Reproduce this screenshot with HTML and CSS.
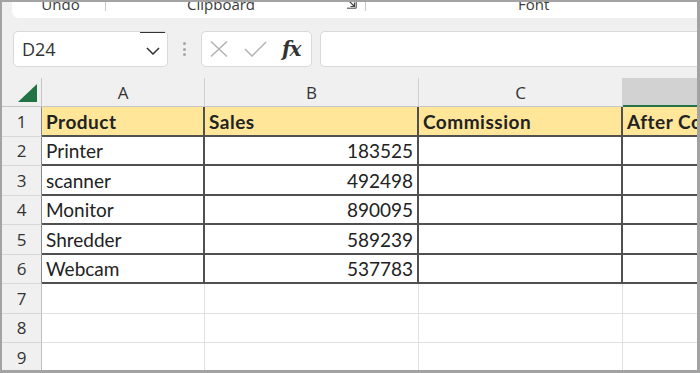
FILE: index.html
```html
<!DOCTYPE html>
<html>
<head>
<meta charset="utf-8">
<link rel="stylesheet" href="styles.css">
</head>
<body>
<div class="frame">
  <div class="ribbon">
    <div class="grp g1"><span class="lbl">Undo</span></div>
    <div class="sep"></div>
    <div class="grp g2"><span class="lbl">Clipboard</span>
      <svg class="launcher" width="10" height="10" viewBox="0 0 10 10"><path d="M1.5 1.5 L7.5 7.5 M3.5 7.5 H7.5 V3.5" fill="none" stroke="#444" stroke-width="1.2"/><path d="M9.2 0 V9.2 H0" fill="none" stroke="#444" stroke-width="1"/></svg>
    </div>
    <div class="sep"></div>
    <div class="grp g3"><span class="lbl">Font</span></div>
  </div>

  <div class="fbar">
    <div class="namebox">
      <span class="ref">D24</span>
      <span class="dd"><svg width="14" height="8" viewBox="0 0 14 8"><path d="M1 1 L7 7 L13 1" fill="none" stroke="#333" stroke-width="1.5"/></svg></span>
    </div>
    <div class="dots"><i></i><i></i><i></i></div>
    <div class="fxbox">
      <svg class="xic" width="18" height="16" viewBox="0 0 18 16"><path d="M1 0.5 L17 15.5 M17 0.5 L1 15.5" stroke="#b3b3b3" stroke-width="1.5" fill="none"/></svg>
      <svg class="ck" width="23" height="16" viewBox="0 0 23 16"><path d="M1 8 L8 15 L22 1" stroke="#b3b3b3" stroke-width="1.5" fill="none"/></svg>
      <span class="fx">fx</span>
    </div>
    <div class="finput"></div>
  </div>

  <div class="sheet">
    <div class="corner"><svg width="19" height="18" viewBox="0 0 19 18"><path d="M0 18 L19 18 L19 0 Z" fill="#217346"/></svg></div>
    <div class="ch">A</div>
    <div class="ch">B</div>
    <div class="ch">C</div>
    <div class="ch sel"></div>

    <div class="rh d">1</div>
    <div class="c hd">Product</div>
    <div class="c hd">Sales</div>
    <div class="c hd">Commission</div>
    <div class="c hd last">After Commission</div>

    <div class="rh d">2</div>
    <div class="c">Printer</div>
    <div class="c num">183525</div>
    <div class="c"></div>
    <div class="c last"></div>

    <div class="rh d">3</div>
    <div class="c">scanner</div>
    <div class="c num">492498</div>
    <div class="c"></div>
    <div class="c last"></div>

    <div class="rh d">4</div>
    <div class="c">Monitor</div>
    <div class="c num">890095</div>
    <div class="c"></div>
    <div class="c last"></div>

    <div class="rh d">5</div>
    <div class="c">Shredder</div>
    <div class="c num">589239</div>
    <div class="c"></div>
    <div class="c last"></div>

    <div class="rh d">6</div>
    <div class="c">Webcam</div>
    <div class="c num">537783</div>
    <div class="c"></div>
    <div class="c last"></div>

    <div class="rh">7</div>
    <div class="e"></div><div class="e"></div><div class="e"></div><div class="e last"></div>
    <div class="rh">8</div>
    <div class="e"></div><div class="e"></div><div class="e"></div><div class="e last"></div>
    <div class="rh">9</div>
    <div class="e"></div><div class="e"></div><div class="e"></div><div class="e last"></div>
  </div>
</div>
</body>
</html>
```

FILE: styles.css
```css
* { box-sizing: border-box; }
html, body { margin: 0; padding: 0; background: #fff; }

.frame {
  width: 700px;
  height: 373px;
  border: 2px solid #a3a3a3;
  border-right-width: 3px;
  border-bottom-width: 3px;
  background: #f0f0f0;
  display: flex;
  flex-direction: column;
  overflow: hidden;
  font-family: "Open Sans", "Noto Sans", sans-serif;
  color: #333;
}

/* ribbon */
.ribbon {
  flex-shrink: 0;
  height: 16px;
  margin-left: 10px;
  background: #fff;
  border-bottom-left-radius: 7px;
  display: flex;
}
.grp { display: flex; height: 16px; }
.lbl {
  display: block;
  font-size: 15px;
  line-height: 16px;
  margin-top: -6px;
  color: #3a3a3a;
  white-space: nowrap;
}
.g1 { width: 93px; justify-content: center; padding-left: 4px; }
.g2 { width: 259px; padding-left: 81px; }
.g3 { flex: 1; padding-left: 152px; }
.sep { width: 1px; height: 9px; background: #c8c8c8; }
.launcher { margin-left: auto; margin-right: 8px; margin-top: -3px; }

/* formula bar */
.fbar {
  flex-shrink: 0;
  margin-top: 13px;
  height: 36px;
  display: flex;
  padding-left: 11px;
}
.namebox {
  width: 155px;
  border: 1px solid #d9d9d9;
  border-radius: 5px;
  background: #fff;
  display: flex;
  align-items: center;
}
.ref {
  flex: 1;
  padding-left: 8px;
  font-size: 18px;
  color: #333;
}
.dd {
  width: 25px;
  align-self: stretch;
  margin-right: 2px;
  border-top: 1px solid #333;
  display: flex;
  align-items: center;
  justify-content: center;
  padding-top: 2px;
}
.dots {
  width: 3px;
  margin: 0 15px;
  display: flex;
  flex-direction: column;
  justify-content: center;
  gap: 2.5px;
}
.dots i { display: block; width: 3px; height: 3px; border-radius: 50%; background: #a6a6a6; }
.fxbox {
  width: 111px;
  border: 1px solid #d9d9d9;
  border-radius: 5px;
  background: #fff;
  display: flex;
  align-items: center;
  padding-left: 8px;
}
.ck { margin-left: 16px; }
.fx {
  margin-left: 15px;
  font-family: "DejaVu Serif", "Liberation Serif", serif;
  font-style: italic;
  font-weight: bold;
  font-size: 20px;
  color: #333;
  letter-spacing: -1px;
}
.finput {
  flex: 1;
  margin-left: 8px;
  border: 1px solid #d9d9d9;
  border-right: none;
  border-radius: 5px 0 0 5px;
  background: #fff;
}

/* sheet */
.sheet {
  margin-top: 11px;
  display: grid;
  grid-template-columns: 40px 163px 214px 204px 1fr;
  grid-template-rows: 29px repeat(9, 29.5px);
  background: #fff;
}
.corner {
  background: #f0f0f0;
  border-right: 1px solid #c6c6c6;
  border-bottom: 1px solid #c6c6c6;
  display: flex;
  justify-content: flex-end;
  align-items: flex-end;
  padding: 0 4px 4px 0;
}
.ch {
  background: #f0f0f0;
  border-right: 1px solid #d0d0d0;
  border-bottom: 1px solid #c6c6c6;
  display: flex;
  align-items: center;
  justify-content: center;
  font-size: 17px;
  color: #333;
}
.ch.sel {
  background: #d2d2d2;
  border-right: none;
  border-bottom: 2px solid #217346;
}
.rh {
  background: #f0f0f0;
  border-right: 1px solid #c0c0c0;
  border-bottom: 1px solid #d8d8d8;
  display: flex;
  align-items: center;
  justify-content: center;
  font-size: 17px;
  color: #333;
}
.rh.d { border-right-color: #8a8a8a; }

.c {
  border-right: 2px solid #505050;
  border-bottom: 2px solid #505050;
  display: flex;
  align-items: center;
  padding: 1px 4px 0 4px;
  font-family: Lato, "Liberation Sans", sans-serif;
  font-size: 19px;
  color: #222;
  white-space: nowrap;
  overflow: hidden;
}
.c.last { border-right: none; }
.c.hd { background: #ffe699; font-weight: bold; letter-spacing: 0.5px; }
.c.num { justify-content: flex-end; }

.e {
  border-right: 1px solid #e1e1e1;
  border-bottom: 1px solid #e1e1e1;
}
.e.last { border-right: none; }
```
